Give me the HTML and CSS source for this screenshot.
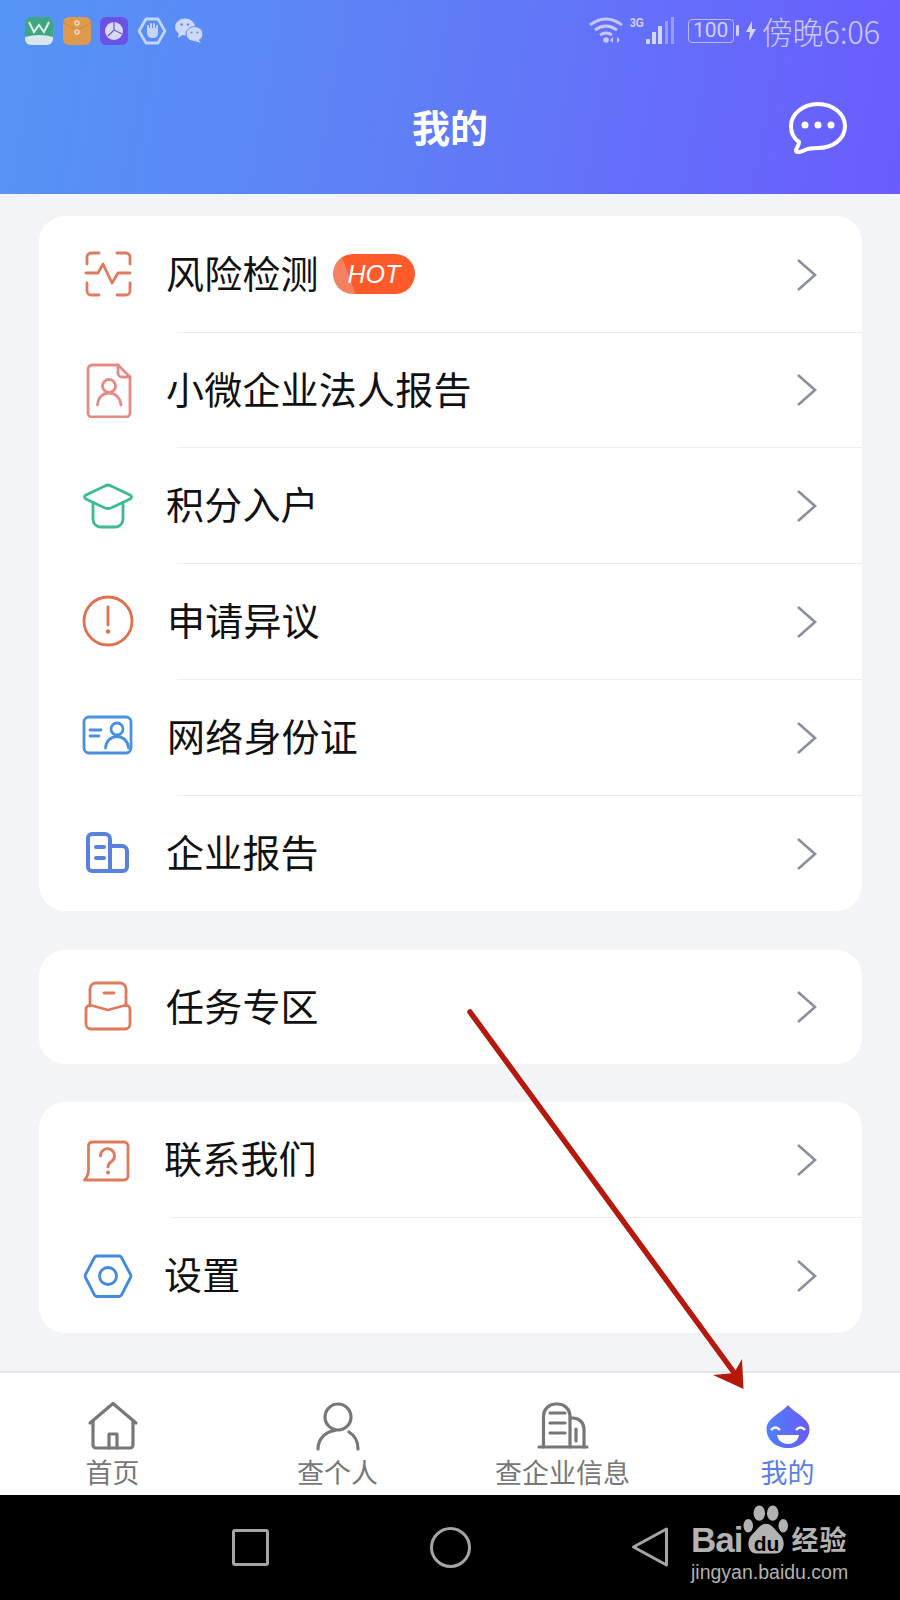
FILE: index.html
```html
<!DOCTYPE html>
<html lang="zh-CN">
<head>
<meta charset="utf-8">
<title>我的</title>
<link rel="stylesheet" href="styles.css">
</head>
<body>
<div class="page">
  <header class="header">
    <div class="status">
      <div class="notifs">
        <svg class="ni" viewBox="0 0 28 28"><rect width="28" height="28" rx="6" fill="#3fa682"/><path d="M0 20 Q14 16 28 20 V22 a6 6 0 0 1-6 6 H6 a6 6 0 0 1-6-6z" fill="#d8e6ee"/><path d="M4 5 L9 15 L14 8 L19 15 L24 5" fill="none" stroke="#dff0ea" stroke-width="2"/></svg>
        <svg class="ni" viewBox="0 0 28 28"><rect width="28" height="28" rx="6" fill="#dd9a4c"/><path d="M0 6 L14 13 L28 6" fill="none" stroke="#c98a3f" stroke-width="1"/><circle cx="14" cy="6" r="2" fill="none" stroke="#f3dcbb" stroke-width="1.4"/><circle cx="14" cy="15" r="2" fill="none" stroke="#f3dcbb" stroke-width="1.4"/></svg>
        <svg class="ni" viewBox="0 0 28 28"><rect width="28" height="28" rx="6" fill="#6a52e8"/><circle cx="14" cy="14" r="9" fill="#d9d9f5"/><path d="M14 5 V13 L22 17 M14 13 L8 19" stroke="#6a52e8" stroke-width="1.2" fill="none"/></svg>
        <svg class="ni" viewBox="0 0 28 28"><path d="M8 2 H20 L27 14 L20 26 H8 L1 14z" fill="none" stroke="#c6d5fb" stroke-width="2.800" stroke-linejoin="round"/><path d="M10 12 V9 M13 12 V7 M16 12 V7 M19 13 V9" fill="none" stroke="#c6d5fb" stroke-width="2" stroke-linecap="round"/><path d="M9 11 H20 V16 Q20 21 15 21 Q9 21 9 16z" fill="#c6d5fb"/></svg>
        <svg class="ni" viewBox="0 0 28 28"><ellipse cx="10" cy="10" rx="10" ry="8.500" fill="#cdd9fb"/><path d="M4 15 L3 21 L9 17z" fill="#cdd9fb"/><ellipse cx="19.500" cy="17" rx="8.500" ry="7.500" fill="#cdd9fb" stroke="#6386f4" stroke-width="1"/><path d="M23 22 L26 26 L20 24z" fill="#cdd9fb"/><circle cx="6.500" cy="7.500" r="1.200" fill="#6386f4"/><circle cx="13" cy="7.500" r="1.200" fill="#6386f4"/><circle cx="16.500" cy="15.500" r="1" fill="#6386f4"/><circle cx="22.500" cy="15.500" r="1" fill="#6386f4"/></svg>
      </div>
      <div class="sysicons">
        <svg class="wifi" viewBox="0 0 34 26"><g fill="none" stroke="#c8c9fb" stroke-width="2.800"><path d="M1 8 Q17 -4 33 8"/><path d="M6 13 Q17 5 28 13"/><path d="M11 18 Q17 14 23 18"/></g><circle cx="17" cy="23" r="2.800" fill="#c8c9fb"/><path d="M24 20 V26 L21 23z M28 20 V26 L31 23z" fill="#c8c9fb"/></svg>
        <div class="signal">
          <span class="net">3G</span>
          <svg class="bars" viewBox="0 0 30 27"><g fill="#d4d5fc"><rect x="1" y="22" width="4" height="5" rx="1"/><rect x="7" y="15" width="4" height="12"/><rect x="13" y="9" width="4" height="18"/></g><g fill="#9d9cfb"><rect x="20" y="4" width="3" height="23"/><rect x="26" y="0" width="3" height="27"/></g></svg>
        </div>
        <div class="battery">100</div>
        <svg class="bolt" viewBox="0 0 10 20"><path d="M6 0 L0 11 H4 L3 20 L10 8 H6z" fill="#d4d5fc"/></svg>
        <span class="clock">傍晚6:06</span>
      </div>
    </div>
    <div class="titlebar">
      <span></span>
      <h1 class="title">我的</h1>
      <svg class="chat" viewBox="0 0 64 56"><path d="M32 3 C47 3 59 13 59 25 C59 38 47 47 32 47 C27 47 23 47 19 49 C15 51 11 52 10 50 C9 48 13 46 13 41 C7 37 5 32 5 25 C5 13 17 3 32 3Z" fill="none" stroke="#fff" stroke-width="4"/><circle cx="19" cy="24" r="3.500" fill="#fff"/><circle cx="32" cy="24" r="3.500" fill="#fff"/><circle cx="45" cy="24" r="3.500" fill="#fff"/></svg>
    </div>
  </header>

  <main class="content">
    <section class="card card-first">
      <div class="row">
        <svg class="icon" viewBox="0 0 56 56"><g class="ln c-orange"><path d="M19 6 H11 a4 4 0 0 0-4 4 V17"/><path d="M37 6 H46 a4 4 0 0 1 4 4 V17"/><path d="M7 36 V44 a4 4 0 0 0 4 4 H19"/><path d="M50 36 V44 a4 4 0 0 1-4 4 H37"/><path d="M6 26 H18 L23 17 L32 36 L38 26 H50"/></g></svg>
        <span class="label">风险检测</span>
        <span class="hot"><span class="hot-text">HOT</span></span>
        <svg class="chev" viewBox="0 0 24 34"><path d="M3 2 L20 17 L3 32"/></svg>
      </div>
      <div class="sep"></div>
      <div class="row row-short">
        <svg class="icon" viewBox="0 0 56 56"><g class="ln c-pink"><path d="M12 3 H38 L50 15 V51 a4 4 0 0 1-4 4 H12 a4 4 0 0 1-4-4 V7 a4 4 0 0 1 4-4z"/><path d="M38 3 V11 a4 4 0 0 0 4 4 H50"/><circle cx="29" cy="24" r="6.500"/><path d="M17.500 43 C18 35 23 31 29 31 C35 31 40 35 41 43"/></g></svg>
        <span class="label">小微企业法人报告</span>
        <svg class="chev" viewBox="0 0 24 34"><path d="M3 2 L20 17 L3 32"/></svg>
      </div>
      <div class="sep"></div>
      <div class="row">
        <svg class="icon" viewBox="0 0 56 56"><g class="ln c-green"><path d="M28 7 Q29.500 7 31 8 L50 17 Q53 19 50 21 L31 30 Q28 31 25 30 L6 21 Q3 19 6 17 L25 8 Q26.500 7 28 7z"/><path d="M13 26 V41 a8 8 0 0 0 8 8 H35 a8 8 0 0 0 8-8 V26"/></g></svg>
        <span class="label">积分入户</span>
        <svg class="chev" viewBox="0 0 24 34"><path d="M3 2 L20 17 L3 32"/></svg>
      </div>
      <div class="sep"></div>
      <div class="row">
        <svg class="icon" viewBox="0 0 56 56"><g class="ln c-red"><circle cx="28" cy="27" r="24"/><path d="M28 13 V31"/></g><circle cx="28" cy="37.500" r="2.200" fill="#e0704f"/></svg>
        <span class="label label-r">申请异议</span>
        <svg class="chev" viewBox="0 0 24 34"><path d="M3 2 L20 17 L3 32"/></svg>
      </div>
      <div class="sep"></div>
      <div class="row">
        <svg class="icon" viewBox="0 0 56 56"><g class="ln c-blue"><rect x="4" y="7" width="47" height="36" rx="5"/><path d="M10 20 H21 M10 26 H19"/><circle cx="37" cy="19" r="6"/><path d="M25.500 38 C26 31 31 26.500 37 26.500 C43 26.500 48 31 48.500 38"/></g></svg>
        <span class="label label-r">网络身份证</span>
        <svg class="chev" viewBox="0 0 24 34"><path d="M3 2 L20 17 L3 32"/></svg>
      </div>
      <div class="sep"></div>
      <div class="row">
        <svg class="icon" viewBox="0 0 56 56"><g class="ln c-indigo lw"><path d="M30 45 H12 a4 4 0 0 1-4-4 V12 a4 4 0 0 1 4-4 H25 a5 5 0 0 1 5 5z"/><path d="M30 20 H42 a5 5 0 0 1 5 5 V41 a4 4 0 0 1-4 4 H30"/><path d="M16 21 H24 M16 32 H24"/></g></svg>
        <span class="label">企业报告</span>
        <svg class="chev" viewBox="0 0 24 34"><path d="M3 2 L20 17 L3 32"/></svg>
      </div>
    </section>

    <section class="card">
      <div class="row row-short">
        <svg class="icon" viewBox="0 0 56 56"><g class="ln c-orange"><path d="M10 27 V10 a6 6 0 0 1 6-6 H40 a6 6 0 0 1 6 6 V27"/><path d="M10 26 a5 5 0 0 0-4 5 V45 a5 5 0 0 0 5 5 H45 a5 5 0 0 0 5-5 V31 a5 5 0 0 0-4-5 L28 31z"/><path d="M24 14 H34"/></g></svg>
        <span class="label">任务专区</span>
        <svg class="chev" viewBox="0 0 24 34"><path d="M3 2 L20 17 L3 32"/></svg>
      </div>
    </section>

    <section class="card">
      <div class="row">
        <svg class="icon" viewBox="0 0 56 56"><g class="ln c-orange"><path d="M12 10 H44 a4 4 0 0 1 4 4 V44 a4 4 0 0 1-4 4 H4.500 C7 45 8.500 42 8.500 38 V14 a4 4 0 0 1 3.500-4z"/><path d="M20.500 24 a7 7 0 1 1 11 5.500 C29 31 28 32 28 35"/></g><circle cx="28" cy="40.500" r="2" fill="#e0795c"/></svg>
        <span class="label label-l">联系我们</span>
        <svg class="chev" viewBox="0 0 24 34"><path d="M3 2 L20 17 L3 32"/></svg>
      </div>
      <div class="sep sep-short"></div>
      <div class="row">
        <svg class="icon" viewBox="0 0 56 56"><g class="ln c-sky"><path d="M17 8 H39 a3 3 0 0 1 2.500 1.500 L50.500 26.500 a3 3 0 0 1 0 3 L41.500 47 a3 3 0 0 1-2.500 1.500 H17 a3 3 0 0 1-2.500-1.500 L5.500 29.500 a3 3 0 0 1 0-3 L14.500 9.500 A3 3 0 0 1 17 8z"/><circle cx="28" cy="28" r="8.500"/></g></svg>
        <span class="label label-l">设置</span>
        <svg class="chev" viewBox="0 0 24 34"><path d="M3 2 L20 17 L3 32"/></svg>
      </div>
    </section>
  </main>

  <nav class="tabs">
    <div class="tab">
      <svg class="tab-icon" viewBox="0 0 56 56"><g class="tl"><path d="M5 25 L28 5.500 L51 25"/><path d="M8 23 V47 a3 3 0 0 0 3 3 H45 a3 3 0 0 0 3-3 V23"/><path d="M24 50 V36 H32 V50"/></g></svg>
      <span class="tab-label">首页</span>
    </div>
    <div class="tab">
      <svg class="tab-icon" viewBox="0 0 56 56"><g class="tl"><circle cx="28" cy="19" r="13"/><path d="M8 51 C8 42 14 34 25 32.500"/><path d="M39 34 C44 37 48 43 48 51"/></g></svg>
      <span class="tab-label">查个人</span>
    </div>
    <div class="tab">
      <svg class="tab-icon" viewBox="0 0 56 56"><g class="tl"><path d="M4 49 H52"/><path d="M8.500 49 V18 a12 12 0 0 1 12-12 H23 a12 12 0 0 1 12 12 V49"/><path d="M35 20 H38 a11 11 0 0 1 11 11 V49"/><path d="M15 15 H30 M15 25 H30 M15 35 H30"/><path d="M41 31 V43"/></g></svg>
      <span class="tab-label">查企业信息</span>
    </div>
    <div class="tab tab-active">
      <svg class="tab-icon" viewBox="0 0 56 56"><defs><linearGradient id="drop" x1="0" x2="1" y1="0" y2="0"><stop offset="0" stop-color="#4f80fc"/><stop offset="1" stop-color="#6a5bf3"/></linearGradient></defs><path d="M28 7 C33 14 49.500 20 49.500 31 C49.500 42 40 50 28 50 C16 50 6.500 42 6.500 31 C6.500 20 23 14 28 7z" fill="url(#drop)"/><path d="M11 32 Q15.500 27 20 32 M36 32 Q40.500 27 45 32" fill="none" stroke="#fff" stroke-width="2.400"/><path d="M17 37 H39 C38 43 33 46 28 46 C23 46 18 43 17 37z" fill="#fff"/></svg>
      <span class="tab-label">我的</span>
    </div>
  </nav>

  <footer class="navbar">
    <span class="nav-square"></span>
    <span class="nav-circle"></span>
    <svg class="nav-back" viewBox="0 0 38 42"><path d="M35.500 3 V39 L2.500 21z" fill="none" stroke="#a5a5a5" stroke-width="3" stroke-linejoin="round"/></svg>
    <div class="mark">
      <div class="mark-top">
        <span class="mark-bai">Bai</span>
        <span class="paw">
          <svg class="paw-svg" viewBox="0 0 50 52"><g fill="#b2b2b2"><ellipse cx="18" cy="9" rx="6" ry="8"/><ellipse cx="32" cy="9" rx="6" ry="8"/><ellipse cx="6.500" cy="22" rx="5" ry="7"/><ellipse cx="43" cy="22" rx="5" ry="7"/><path d="M25 20 C31 20 35 27 40 32 C46 38 44 51 35 51 H15 C6 51 4 38 10 32 C15 27 19 20 25 20z"/></g></svg>
          <span class="paw-du">du</span>
        </span>
        <span class="mark-cn">经验</span>
      </div>
      <div class="mark-url">jingyan.baidu.com</div>
    </div>
  </footer>

  <svg class="arrow" viewBox="0 0 900 1600"><path d="M470 1012 L738 1378" stroke="#b5190d" stroke-width="5.500" stroke-linecap="round" fill="none"/><path d="M743.500 1389 L742 1359 L734 1373 L713 1375z" fill="#b5190d"/></svg>
</div>
</body>
</html>
```
FILE: styles.css
```css
* { box-sizing: border-box; }
html, body { margin: 0; padding: 0; }
body { font-family: "Noto Sans CJK SC", "Noto Sans", sans-serif; background: #f2f4f8; }
svg { display: block; flex: none; }

.page { position: relative; width: 900px; height: 1600px; display: flex; flex-direction: column; overflow: hidden; }

.header { height: 194px; flex: none; background: linear-gradient(100deg, #5595f5 0%, #5f7ff6 45%, #6a5cfe 100%); }

.status { height: 62px; padding: 17px 20px 0 25px; display: flex; justify-content: space-between; align-items: flex-start; }
.notifs { display: flex; gap: 9.500px; }
.ni { width: 28px; height: 28px; }
.sysicons { display: flex; align-items: flex-start; }
.wifi { width: 34px; height: 26px; }
.signal { display: flex; align-items: flex-start; margin-left: 7px; }
.net { width: 15px; font: bold 13px/12px "Liberation Sans", sans-serif; color: #d4d5fc; transform: scaleX(.8); transform-origin: left top; }
.bars { width: 30px; height: 27px; }
.battery { position: relative; width: 46px; height: 24px; margin: 2px 0 0 13px; border: 1.5px solid #b9bbfa; border-radius: 4px; color: #cfd0fc; font: 21px/21px Roboto, sans-serif; text-align: center; }
.battery::after { content: ""; position: absolute; left: 47px; top: 5px; width: 3px; height: 11px; background: #cfd0fc; border-radius: 1px; }
.bolt { width: 10px; height: 20px; margin: 4px 0 0 12px; }
.clock { margin: -6px 0 0 6px; font-size: 31px; line-height: 40px; font-weight: 300; color: #c9cafb; white-space: nowrap; letter-spacing: -.2px; }

.titlebar { height: 132px; display: grid; grid-template-columns: 1fr auto 1fr; align-items: center; padding: 0 50px; }
.title { margin: 0 0 5px; font-size: 38px; font-weight: 700; line-height: 56px; color: #fff; }
.chat { width: 64px; height: 56px; justify-self: end; margin-top: 2px; }

.content { flex: 1; padding: 22px 38px 0 39px; display: flex; flex-direction: column; gap: 38px; }
.card { background: #fff; border-radius: 26px; }
.card-first { padding-top: 1px; margin-bottom: 1px; }
.row { height: 115px; display: flex; align-items: center; padding: 0 43px 0 41px; }
.row-short { height: 114px; }
.icon { width: 56px; height: 56px; }
.label { margin-left: 30px; padding-bottom: 5px; font-size: 38px; line-height: 50px; letter-spacing: .2px; color: #111; white-space: nowrap; }
.label-r { margin-left: 31px; }
.label-l { margin-left: 28px; }
.chev { width: 24px; height: 34px; margin-left: auto; }
.chev path { fill: none; stroke: #8c909e; stroke-width: 2.6; }
.sep { height: 1px; margin-left: 138px; background: #ececee; }
.sep-short { margin-left: 132px; }

.hot { margin: 0 0 2px 14px; width: 82px; height: 40px; border-radius: 20px; display: flex; align-items: center; justify-content: center; background: linear-gradient(70deg, #f4805f 0 23%, #ff5a2a 23.500%); }
.hot-text { font: italic 25px/40px "Liberation Sans", sans-serif; color: #fff; }

.ln { fill: none; stroke-width: 2.8; stroke-linecap: round; stroke-linejoin: round; }
.lw { stroke-width: 4; }
.c-orange { stroke: #e07a5c; }
.c-pink { stroke: #e58a85; }
.c-green { stroke: #3dbb8e; }
.c-red { stroke: #e0704f; }
.c-blue { stroke: #4a90e2; }
.c-indigo { stroke: #5782e0; }
.c-sky { stroke: #4289e0; }

.tabs { flex: none; height: 124px; display: grid; grid-template-columns: repeat(4, 225px); background: #fff; border-top: 2px solid #e6e6e6; }
.tab { display: flex; flex-direction: column; align-items: center; padding-top: 25px; }
.tab-icon { width: 56px; height: 56px; }
.tab-label { font-size: 27px; line-height: 36px; color: #777; white-space: nowrap; }
.tab-active .tab-label { color: #5b7fe5; }
.tl { fill: none; stroke: #777; stroke-width: 3.2; stroke-linecap: round; stroke-linejoin: round; }

.navbar { position: relative; flex: none; height: 105px; background: #000; }
.nav-square { position: absolute; left: 232px; top: 34px; width: 37px; height: 37px; border: 3.5px solid #a5a5a5; border-radius: 3px; }
.nav-circle { position: absolute; left: 430px; top: 32px; width: 41px; height: 41px; border: 3.5px solid #a5a5a5; border-radius: 50%; }
.nav-back { position: absolute; left: 631px; top: 31px; width: 38px; height: 42px; }
.mark { position: absolute; left: 691px; top: 9px; width: 170px; }
.mark-top { display: flex; align-items: flex-end; height: 51px; }
.mark-bai { font: bold 35px/32px "Liberation Sans", sans-serif; color: #b2b2b2; letter-spacing: -1px; margin-bottom: -1px; }
.paw { position: relative; width: 48px; height: 51px; margin-left: 0; }
.paw-svg { width: 48px; height: 51px; }
.paw-du { position: absolute; left: 0; right: 0; bottom: 1px; text-align: center; font: bold 21px/20px "Liberation Sans", sans-serif; color: #000; }
.mark-cn { margin-left: 1px; font-size: 27px; line-height: 32px; font-weight: 700; letter-spacing: 1px; color: #b2b2b2; white-space: nowrap; }
.mark-url { margin-top: 5px; font: 19.500px/24px "Liberation Sans", sans-serif; color: #b2b2b2; white-space: nowrap; }

.arrow { position: absolute; left: 0; top: 0; width: 900px; height: 1600px; pointer-events: none; }
```
